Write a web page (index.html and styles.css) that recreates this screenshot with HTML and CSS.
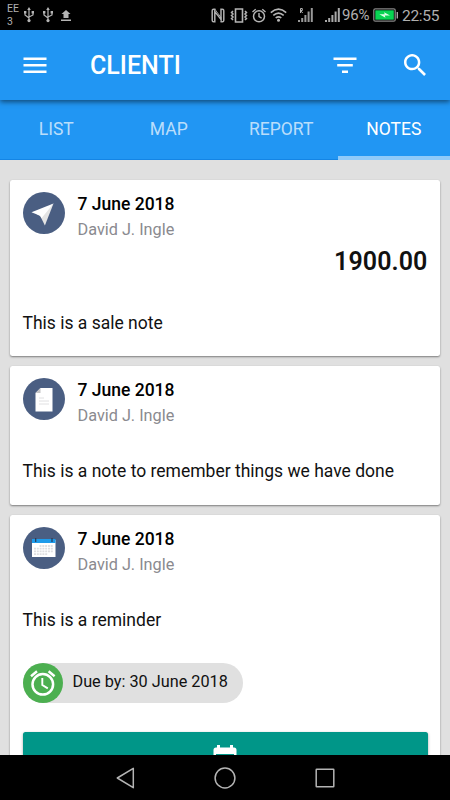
FILE: index.html
```html
<!DOCTYPE html>
<html lang="en">
<head>
<meta charset="utf-8">
<title>Clienti</title>
<link rel="stylesheet" href="styles.css">
</head>
<body>
<div class="phone">
  <div class="status">
    <div class="carrier"><span>EE</span><span>3</span></div>
    <svg class="usb" width="10" height="16" viewBox="0 0 10 16"><path d="M5 2v12M1 5v3l4 3M9 5v3l-4 2" fill="none" stroke="#b5b5b5" stroke-width="1.2"/><path d="M5 0L3.2 3h3.6zM0 4h2.400v2.500H0zM7.600 4H10v2.500H7.600z" fill="#b5b5b5"/><circle cx="5" cy="13.600" r="1.600" fill="#b5b5b5"/></svg>
    <svg class="usb" width="10" height="16" viewBox="0 0 10 16"><path d="M5 2v12M1 5v3l4 3M9 5v3l-4 2" fill="none" stroke="#b5b5b5" stroke-width="1.2"/><path d="M5 0L3.2 3h3.6zM0 4h2.400v2.500H0zM7.600 4H10v2.500H7.600z" fill="#b5b5b5"/><circle cx="5" cy="13.600" r="1.600" fill="#b5b5b5"/></svg>
    <svg class="upload" width="10" height="11" viewBox="0 0 10 11"><path d="M5 0l4.500 4H7.500v4h-5V4H.5zM0 9.500h10V11H0z" fill="#b5b5b5"/></svg>
    <div class="status-right">
      <svg width="14" height="15" viewBox="0 0 14 15"><path d="M4.500 1.200H2.600Q1.200 1.200 1.200 2.800v9.400q0 1.600 1.400 1.600h1.200V3.600L10 11.400V1.200h1.400q1.400 0 1.400 1.600v9.400q0 1.600-1.400 1.600H9.500" fill="none" stroke="#b0b0b0" stroke-width="1.500"/><path d="M3.800 3.600V1.200L10 9.500v4.300" fill="none" stroke="#b0b0b0" stroke-width=".9"/></svg>
      <svg class="vibrate" width="18" height="15" viewBox="0 0 18 15"><path d="M5.500 1h7v13h-7z" fill="none" stroke="#b5b5b5" stroke-width="1.600"/><path d="M3 3L1.500 4.500 3 6 1.500 7.500 3 9 1.500 10.500 3 12M15 3l1.500 1.500L15 6l1.500 1.500L15 9l1.500 1.500L15 12" fill="none" stroke="#b5b5b5" stroke-width="1.500"/></svg>
      <svg class="alarm-small" width="14" height="15" viewBox="0 0 14 15"><circle cx="7" cy="8.300" r="5.500" fill="none" stroke="#b5b5b5" stroke-width="1.500"/><path d="M.5 4l3.200-2.800M13.500 4l-3.200-2.800M7 5v3.600l2.600 1.600" fill="none" stroke="#b5b5b5" stroke-width="1.400"/></svg>
      <svg class="wifi" width="17" height="14" viewBox="0 0 17 14"><path d="M.8 4.600q7.700-6.800 15.400 0M3.300 7.400q5.200-4.600 10.400 0M5.700 10q2.800-2.400 5.600 0" fill="none" stroke="#b5b5b5" stroke-width="1.600"/><circle cx="8.500" cy="12.300" r="1.500" fill="#b5b5b5"/></svg>
      <svg class="signal-r" width="15" height="14" viewBox="0 0 15 14"><path d="M0 12h2v2H0zM3.200 10h2v4h-2zM6.400 7h2v7h-2zM9.600 3.500h2V14h-2zM12.800 0h2v14h-2z" fill="#999"/><path d="M2.500 5V.5h1.800v2H2.500L4.700 5" fill="none" stroke="#b5b5b5"/></svg>
      <svg class="signal" width="15" height="14" viewBox="0 0 15 14"><path d="M0 12h2v2H0zM3.200 10h2v4h-2zM6.400 7h2v7h-2zM9.600 3.500h2V14h-2zM12.800 0h2v14h-2z" fill="#aaa"/></svg>
      <span class="percent">96%</span>
      <svg class="battery" width="26" height="14" viewBox="0 0 26 14"><rect x=".8" y=".8" width="21.400" height="12.400" rx="1.500" fill="none" stroke="#858585" stroke-width="1.300"/><path d="M2.300 2.300h18.500v9.400H2.300z" fill="#08d453"/><path d="M23.600 4H25v6.500h-1.400z" fill="#aaa"/><path d="M6.300 6.300l5.400 0-.7-2 6 3.300-5.200 0 .7 2.200z" fill="#dfffe9"/></svg>
      <span class="clock">22:55</span>
    </div>
  </div>

  <header class="toolbar">
    <svg class="menu" width="24" height="17" viewBox="0 0 24 17"><path d="M.5 1.800h23M.5 8.200h23M.5 14.700h23" stroke="#fff" stroke-width="2.500"/></svg>
    <h1>CLIENTI</h1>
    <svg class="filter" width="24" height="17" viewBox="0 0 24 17"><path d="M.5 1.800h23M4.200 8.200h15.600M9 14.700h6" stroke="#fff" stroke-width="2.500"/></svg>
    <svg class="search" width="22" height="22" viewBox="3 3 17.500 17.500"><path d="M15.500 14h-.79l-.28-.27C15.410 12.590 16 11.110 16 9.500 16 5.910 13.090 3 9.500 3S3 5.910 3 9.500 5.910 16 9.500 16c1.610 0 3.090-.59 4.230-1.570l.27.28v.79l5 4.990L20.490 19l-4.990-5zm-6 0C7.010 14 5 11.990 5 9.500S7.010 5 9.500 5 14 7.010 14 9.500 11.990 14 9.500 14z" fill="#fff"/></svg>
  </header>

  <nav class="tabs">
    <span class="tab">LIST</span>
    <span class="tab">MAP</span>
    <span class="tab">REPORT</span>
    <span class="tab active">NOTES</span>
  </nav>

  <main class="content">
    <article class="card sale">
      <div class="head">
        <svg class="avatar" width="42" height="42" viewBox="0 0 42 42"><circle cx="21" cy="21" r="21" fill="#4a5e82"/><path d="M30.500 11.500L8.500 20.200l8.600 3.600z" fill="#fff"/><path d="M30.500 11.500L17.100 23.800l4.800 9.700z" fill="#e4e4e4"/><path d="M30.500 11.500L18.500 26.200l-1.400-2.400-3-1.300z" fill="#fff"/></svg>
        <div><h2>7 June 2018</h2><p class="author">David J. Ingle</p></div>
      </div>
      <p class="amount">1900.00</p>
      <p class="text">This is a sale note</p>
    </article>

    <article class="card note">
      <div class="head">
        <svg class="avatar" width="42" height="42" viewBox="0 0 42 42"><circle cx="21" cy="21" r="21" fill="#4a5e82"/><path d="M17.500 10H29.500v23.500h-17V15z" fill="#fff"/><path d="M17.500 10v5h-5z" fill="#c4c4c6"/><path d="M16 20h5M16 23h10M16 26h10" stroke="#e0e0e2"/></svg>
        <div><h2>7 June 2018</h2><p class="author">David J. Ingle</p></div>
      </div>
      <p class="text">This is a note to remember things we have done</p>
    </article>

    <article class="card reminder">
      <div class="head">
        <svg class="avatar" width="42" height="42" viewBox="0 0 42 42"><circle cx="21" cy="21" r="21" fill="#4a5e82"/><path d="M9 13h23.500v17H9z" fill="#fff"/><path d="M9 12h23.500v4H9z" fill="#1e9bea"/><path d="M12.700 11v4M29 11v4" stroke="#293955" stroke-width="1.200"/><path d="M16.500 19h14M11 21.700h19.500M11 24.400h19.500M11 27.100h13.500" stroke="#dedee0" stroke-width="1.800" stroke-dasharray="2 .8"/></svg>
        <div><h2>7 June 2018</h2><p class="author">David J. Ingle</p></div>
      </div>
      <p class="text">This is a reminder</p>
      <div class="chip">
        <svg width="40" height="40" viewBox="0 0 40 40"><circle cx="20" cy="20" r="20" fill="#4caf50"/><circle cx="19.800" cy="21.300" r="10.300" fill="none" stroke="#fff" stroke-width="2.500"/><path d="M19.300 15v7l5.500 3.400" fill="none" stroke="#fff" stroke-width="1.900"/><path d="M8 13.200l6-4.900M31.600 13.200l-6-4.900" stroke="#fff" stroke-width="2.500"/></svg>
        <span>Due by: 30 June 2018</span>
      </div>
      <div class="button"><svg width="24" height="27" viewBox="0 0 24 27"><path d="M3 2.500h1V0h3v2.500h10V0h3v2.500h1q2.500 0 2.500 2.500v19q0 2.500-2.500 2.500H3Q.5 26.500.5 24V5Q.5 2.500 3 2.500zM3 9v15h18V9z" fill="#fff" fill-rule="evenodd"/></svg></div>
    </article>
  </main>

  <footer class="navbar">
    <svg width="19" height="22" viewBox="0 0 19 22"><path d="M17.300 1.300v19.400L1.300 11z" fill="none" stroke="#b4b4b4" stroke-width="1.500" stroke-linejoin="round"/></svg>
    <svg width="22" height="22" viewBox="0 0 22 22"><circle cx="11" cy="11" r="9.900" fill="none" stroke="#b4b4b4" stroke-width="1.500"/></svg>
    <svg width="20" height="20" viewBox="0 0 20 20"><rect x="1.200" y="1.200" width="17.600" height="17.600" rx=".5" fill="none" stroke="#b4b4b4" stroke-width="1.500"/></svg>
  </footer>
</div>
</body>
</html>
```
FILE: styles.css
```css
* { box-sizing: border-box; }
body, h1, h2, p { margin: 0; }
body { font-family: Roboto, "Liberation Sans", sans-serif; }
svg { display: block; flex: none; }

.phone {
  width: 450px;
  height: 800px;
  display: flex;
  flex-direction: column;
  overflow: hidden;
  background: #e0e0e0;
}

.status {
  flex: none;
  height: 30px;
  padding: 0 10px 0 7px;
  display: flex;
  align-items: center;
  background: #000;
  color: #b0b0b0;
}
.carrier {
  width: 17px;
  display: flex;
  flex-direction: column;
  font-size: 10.5px;
  line-height: 13.5px;
}
.usb { margin-right: 8.500px; }
.status-right { margin-left: auto; display: flex; align-items: center; }
.vibrate { margin-left: 5px; }
.alarm-small { margin-left: 4.500px; }
.wifi { margin-left: 4px; }
.signal-r { margin-left: 11px; }
.signal { margin-left: 12px; }
.percent { width: 29px; margin-left: 2px; font-size: 15px; letter-spacing: -.2px; }
.battery { margin-left: 2px; }
.clock { width: 38px; margin-left: 3px; font-size: 15.500px; letter-spacing: -.3px; padding-top: 1px; }

.toolbar {
  position: relative;
  z-index: 1;
  flex: none;
  height: 70px;
  padding: 0 24px 0 23px;
  display: flex;
  align-items: center;
  background: #2196f3;
  color: #fff;
  box-shadow: 0 2px 5px rgba(0, 0, 0, .5);
}
.toolbar h1 { margin-left: 43px; padding-top: 2px; font-size: 25px; font-weight: 500; line-height: 30px; }
.filter { margin-left: auto; }
.search { margin-left: 47px; }

.tabs {
  flex: none;
  height: 60px;
  display: grid;
  grid-template-columns: repeat(4, 1fr);
  background: #2196f3;
}
.tab {
  display: flex;
  align-items: center;
  justify-content: center;
  padding-bottom: 1px;
  font-size: 17.500px;
  color: rgba(255, 255, 255, .7);
  border-bottom: 1px solid #1485e5;
}
.tab.active { padding: 2px 0 0; color: #fff; border-bottom: 4px solid #90caf9; }

.content {
  flex: 1;
  min-height: 0;
  overflow: hidden;
  padding: 20px 10px 0;
  display: flex;
  flex-direction: column;
  gap: 10px;
}
.card {
  flex: none;
  padding: 12px 12.500px 0;
  background: #fff;
  border-radius: 2.500px;
  box-shadow: 0 1px 2px rgba(0, 0, 0, .45);
}
.sale { height: 176px; }
.note { height: 139px; }
.reminder { height: 300px; }
.head { height: 50px; display: flex; gap: 13px; }
.head h2 { font-size: 17.500px; font-weight: 500; line-height: 24px; color: #000; }
.author { margin-top: 1px; font-size: 16.250px; line-height: 25px; color: #8a8a8f; }
.amount { padding-top: 1px; font-size: 25px; font-weight: 600; letter-spacing: .1px; line-height: 38px; text-align: right; color: #111; }
.text { font-size: 17.500px; line-height: 24px; color: #111; }
.sale .text { margin-top: 30px; }
.note .text, .reminder .text { margin-top: 31px; }
.chip {
  width: 220px;
  height: 40px;
  margin-top: 31px;
  display: flex;
  gap: 10px;
  border-radius: 20px;
  background: #e0e0e0;
  font-size: 16.250px;
  line-height: 37px;
  color: #111;
}
.button {
  height: 45px;
  margin-top: 29px;
  padding-top: 13px;
  display: flex;
  justify-content: center;
  border-radius: 2.500px;
  background: #009688;
  box-shadow: 0 1px 3px rgba(0, 0, 0, .35);
}

.navbar {
  flex: none;
  height: 45px;
  display: grid;
  grid-template-columns: repeat(3, 100px);
  justify-content: center;
  align-items: center;
  justify-items: center;
  background: #000;
}
```
